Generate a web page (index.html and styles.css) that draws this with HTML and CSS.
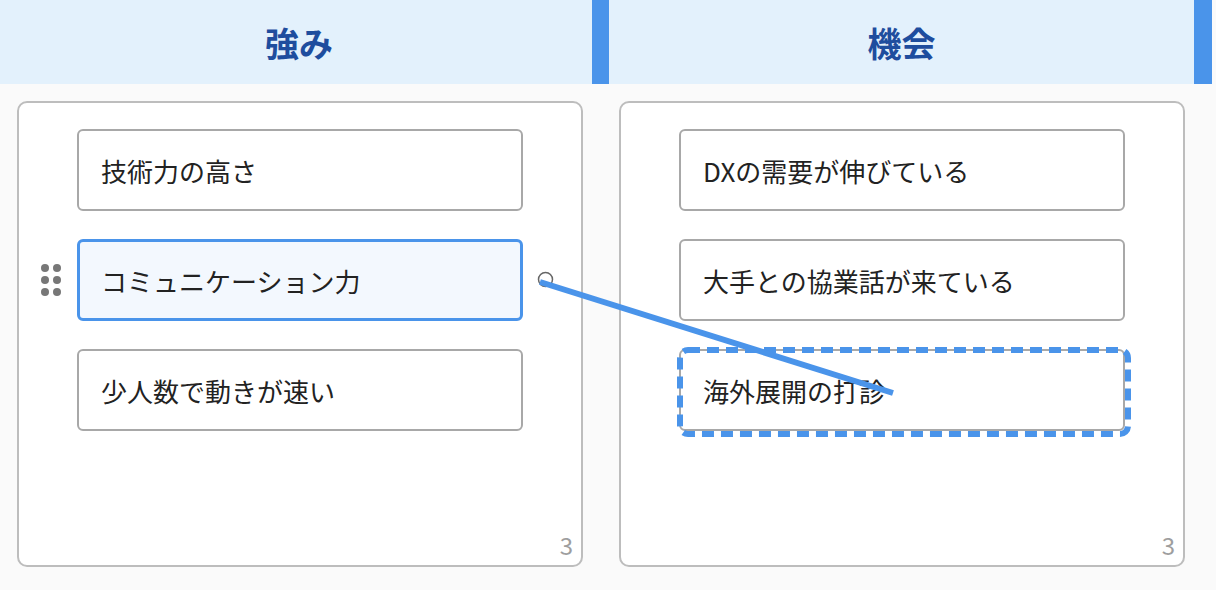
FILE: index.html
```html
<!DOCTYPE html>
<html>
  <head>
    <title>SWOT Board</title>
    <link rel="stylesheet" href="styles.css">
  </head>
  <body>
    <div class="board">
      <div class="headers">
        <div class="header">強み</div>
        <div class="header header-last">機会</div>
      </div>

      <div class="columns">
        <div class="card">
          <div class="item">技術力の高さ</div>
          <div class="item item-selected">
            <div class="drag-handle">
              <span></span><span></span>
              <span></span><span></span>
              <span></span><span></span>
            </div>
            コミュニケーション力
          </div>
          <div class="item">少人数で動きが速い</div>
          <div class="count">3</div>
        </div>

        <div class="card">
          <div class="item">DXの需要が伸びている</div>
          <div class="item">大手との協業話が来ている</div>
          <div class="item item-target">
            <svg class="drop-outline" viewBox="0 0 454 90" xmlns="http://www.w3.org/2000/svg">
              <rect x="3" y="3" width="448" height="84" rx="8" ry="8" />
            </svg>
            海外展開の打診
          </div>
          <div class="count">3</div>
        </div>
      </div>

      <svg class="connector" viewBox="0 0 1216 590" xmlns="http://www.w3.org/2000/svg">
        <circle cx="545.5" cy="279.5" r="7" class="connector-dot" />
        <line x1="540" y1="282" x2="893" y2="393" class="connector-line" />
      </svg>
    </div>
  </body>
</html>
```

FILE: styles.css
```css
body {
  margin: 0;
  background-color: #fafafa;
  font-family: "Noto Sans CJK JP", "Noto Sans", sans-serif;
  color: #222222;
}
.board {
  position: relative;
  width: 1216px;
  height: 590px;
  overflow: hidden;
}
.headers {
  display: grid;
  grid-template-columns: 609px 603px;
}
.header {
  height: 84px;
  background-color: #e3f1fc;
  border-right: 17px solid #4a94ea;
  display: flex;
  align-items: center;
  justify-content: center;
  font-size: 34px;
  font-weight: 700;
  color: #1e4d9e;
  padding-left: 6px;
}
.header-last {
  border-right-width: 18px;
  padding-left: 0;
}
.columns {
  display: flex;
  gap: 36px;
  padding: 17px 0 0 17px;
}
.card {
  position: relative;
  box-sizing: border-box;
  width: 566px;
  height: 466px;
  padding: 26px 58px;
  background-color: #ffffff;
  border: 2px solid #bdbdbd;
  border-radius: 10px;
  display: flex;
  flex-direction: column;
  gap: 28px;
}
.item {
  position: relative;
  box-sizing: border-box;
  height: 82px;
  padding-left: 22px;
  border: 2px solid #a8a8a8;
  border-radius: 6px;
  display: flex;
  align-items: center;
  font-size: 26px;
  background-color: #ffffff;
}
.item-selected {
  border: 3px solid #4a94ea;
  padding-left: 21px;
  background-color: #f3f8fe;
}
.drag-handle {
  position: absolute;
  left: -39px;
  top: 50%;
  transform: translateY(-50%);
  display: grid;
  grid-template-columns: 8px 8px;
  gap: 4px;
}
.drag-handle span {
  width: 8px;
  height: 8px;
  border-radius: 50%;
  background-color: #777777;
}
.drop-outline {
  position: absolute;
  left: -4px;
  top: -4px;
  width: 454px;
  height: 90px;
}
.drop-outline rect {
  fill: none;
  stroke: #4a94ea;
  stroke-width: 6;
  stroke-dasharray: 12 7;
}
.count {
  position: absolute;
  right: 8px;
  bottom: 8px;
  font-size: 24px;
  line-height: 24px;
  color: #9e9e9e;
}
.connector {
  position: absolute;
  left: 0;
  top: 0;
  width: 1216px;
  height: 590px;
  pointer-events: none;
}
.connector-dot {
  fill: #ffffff;
  stroke: #666666;
  stroke-width: 1.5;
}
.connector-line {
  stroke: #4a94ea;
  stroke-width: 6;
}
```
